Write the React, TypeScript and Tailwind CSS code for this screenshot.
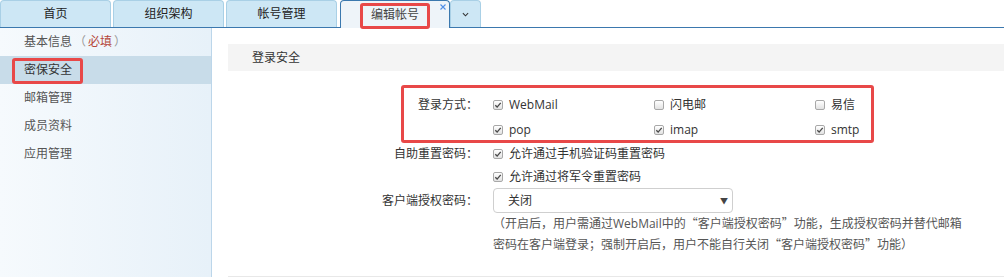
import type { ReactNode } from 'react';

function Check({ checked }: { checked?: boolean }) {
  return (
    <span className="inline-flex items-center justify-center w-[10px] h-[10px] rounded-[2px] border border-[#a8a8a8] bg-linear-to-b from-white to-[#e2e2e2]">
      {checked && (
        <svg viewBox="0 0 10 10" className="w-[8px] h-[8px]">
          <path d="M1.6 5.3 L3.9 7.6 L8.4 2.3" stroke="#4a4a4a" strokeWidth="1.7" fill="none" />
        </svg>
      )}
    </span>
  );
}

function Opt({ checked, children, w = 'w-[161px]' }: { checked?: boolean; children: ReactNode; w?: string }) {
  return (
    <div className={`${w} flex items-center gap-[6px]`}>
      <Check checked={checked} />
      <span>{children}</span>
    </div>
  );
}

function Row({ label, h = 'h-[24px]', children }: { label?: string; h?: string; children: ReactNode }) {
  return (
    <div className={`flex items-center ${h}`}>
      <div className="w-[250px] text-right">{label}</div>
      <div className="ml-[15px] flex items-center">{children}</div>
    </div>
  );
}

// full-width quotes come from the CJK face
const Q = ({ children }: { children: ReactNode }) => (
  <span className="font-['Noto_Sans_CJK_SC',sans-serif]">{children}</span>
);

const tabs = ['首页', '组织架构', '帐号管理'];
const menu = ['邮箱管理', '成员资料', '应用管理'];

export default function App() {
  return (
    <div className="w-[1004px] h-[277px] overflow-hidden bg-white text-[12px] text-[#333] font-['Open_Sans','Noto_Sans_CJK_SC',sans-serif] [text-spacing-trim:space-all] flex flex-col">
      {/* tab bar */}
      <div className="h-[28px] shrink-0 flex items-end border-b border-[#3b78ae]">
        {tabs.map((t) => (
          <div
            key={t}
            className="w-[111px] mr-[2px] h-[27px] flex items-center justify-center rounded-t-[4px] border border-b-0 border-[#a9d0e6] bg-[#cde7f5] text-[#222]"
          >
            {t}
          </div>
        ))}
        <div className="relative w-[110px] ml-[1px] h-[28px] -mb-px flex items-center justify-center rounded-t-[4px] border border-b-0 border-[#3b78ae] bg-[#eef4f9] text-[#444]">
          编辑帐号
          <div className="absolute left-[19px] top-[2px] w-[70px] h-[26px] border-[3px] border-[#e84848] rounded-[3px]" />
          <svg viewBox="0 0 6 6" className="absolute right-[3px] top-[3px] w-[6px] h-[6px]">
            <path d="M0.5 0.5 L5.5 5.5 M5.5 0.5 L0.5 5.5" stroke="#4f8ee6" strokeWidth="1.1" />
          </svg>
        </div>
        <div className="w-[31px] h-[27px] flex items-center justify-center rounded-t-[4px] border border-b-0 border-[#a9d0e6] bg-[#cde7f5]">
          <svg viewBox="0 0 8 5" className="w-[7px] h-[5px]">
            <path d="M1 1 L4 4 L7 1" stroke="#333" strokeWidth="1.2" fill="none" />
          </svg>
        </div>
      </div>

      <div className="flex flex-1 min-h-0">
        {/* sidebar */}
        <aside className="w-[212px] shrink-0 border-r border-[#bcd6ea] bg-linear-to-r from-[#f6fafd] to-[#e7f1f9] text-[#555]">
          <div className="h-[28px] flex items-center pl-[24px]">
            基本信息<span className="text-[#999] ml-[2px] mr-[2px]">（</span>
            <span className="text-[#b5473a]">必填</span>
            <span className="text-[#999] ml-[2px]">）</span>
          </div>
          <div className="relative h-[28px] flex items-center pl-[24px] bg-[#c8dce9] text-[#333]">
            密保安全
            <div className="absolute left-[12px] top-[2px] w-[71px] h-[26px] border-[3px] border-[#e84848] rounded-[3px]" />
          </div>
          {menu.map((m) => (
            <div key={m} className="h-[28px] flex items-center pl-[24px]">
              {m}
            </div>
          ))}
        </aside>

        {/* content */}
        <main className="flex-1 pl-[16px] pt-[16px]">
          <section className="h-[233px] border-b border-[#e8e8e8] flex flex-col">
            <div className="h-[27px] shrink-0 bg-[#f4f4f4] pl-[24px] flex items-center">登录安全</div>
            <div className="pt-[22px]">
              <div className="relative">
                <Row label="登录方式：">
                  <Opt checked>WebMail</Opt>
                  <Opt>闪电邮</Opt>
                  <Opt w="w-[60px]">易信</Opt>
                </Row>
                <Row label="" h="h-[25px]">
                  <Opt checked>pop</Opt>
                  <Opt checked>imap</Opt>
                  <Opt checked w="w-[60px]">smtp</Opt>
                </Row>
                <div className="absolute left-[173px] w-[473px] top-[-8px] bottom-[-1px] border-[3px] border-[#e84848] rounded-[3px]" />
              </div>
              <Row label="自助重置密码：">
                <Opt checked w="w-[300px]">允许通过手机验证码重置密码</Opt>
              </Row>
              <Row label="" h="h-[22px]">
                <Opt checked w="w-[300px]">允许通过将军令重置密码</Opt>
              </Row>
              <Row label="客户端授权密码：" h="h-[25px]">
                <div className="w-[240px] h-[25px] border border-[#cfcfcf] rounded-[4px] flex items-center justify-between pl-[14px] pr-[4px]">
                  <span>关闭</span>
                  <span className="text-[8px] text-[#444]">▼</span>
                </div>
              </Row>
              <p className="ml-[265px] leading-[20px] text-[#555] whitespace-nowrap">
                （开启后，用户需通过WebMail中的<Q>“</Q>客户端授权密码<Q>”</Q>功能，生成授权密码并替代邮箱
                <br />
                密码在客户端登录；强制开启后，用户不能自行关闭<Q>“</Q>客户端授权密码<Q>”</Q>功能）
              </p>
            </div>
          </section>
        </main>
      </div>
    </div>
  );
}
